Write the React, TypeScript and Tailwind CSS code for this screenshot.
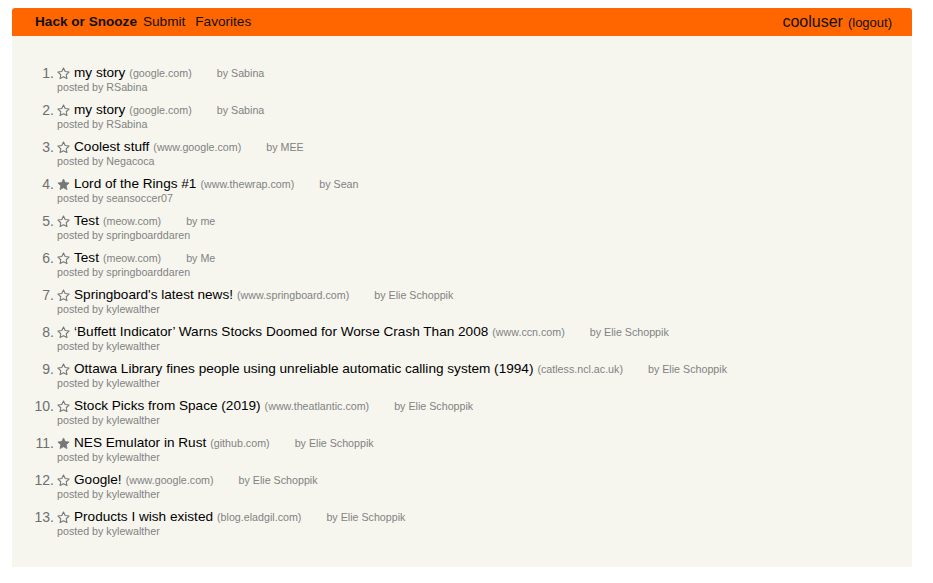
import { useState } from "react";

type Story = {
  id: number;
  title: string;
  hostname: string;
  author: string;
  username: string;
  favorite: boolean;
};

const stories: Story[] = [
  { id: 1, title: "my story", hostname: "google.com", author: "Sabina", username: "RSabina", favorite: false },
  { id: 2, title: "my story", hostname: "google.com", author: "Sabina", username: "RSabina", favorite: false },
  { id: 3, title: "Coolest stuff", hostname: "www.google.com", author: "MEE", username: "Negacoca", favorite: false },
  { id: 4, title: "Lord of the Rings #1", hostname: "www.thewrap.com", author: "Sean", username: "seansoccer07", favorite: true },
  { id: 5, title: "Test", hostname: "meow.com", author: "me", username: "springboarddaren", favorite: false },
  { id: 6, title: "Test", hostname: "meow.com", author: "Me", username: "springboarddaren", favorite: false },
  { id: 7, title: "Springboard's latest news!", hostname: "www.springboard.com", author: "Elie Schoppik", username: "kylewalther", favorite: false },
  { id: 8, title: "‘Buffett Indicator’ Warns Stocks Doomed for Worse Crash Than 2008", hostname: "www.ccn.com", author: "Elie Schoppik", username: "kylewalther", favorite: false },
  { id: 9, title: "Ottawa Library fines people using unreliable automatic calling system (1994)", hostname: "catless.ncl.ac.uk", author: "Elie Schoppik", username: "kylewalther", favorite: false },
  { id: 10, title: "Stock Picks from Space (2019)", hostname: "www.theatlantic.com", author: "Elie Schoppik", username: "kylewalther", favorite: false },
  { id: 11, title: "NES Emulator in Rust", hostname: "github.com", author: "Elie Schoppik", username: "kylewalther", favorite: true },
  { id: 12, title: "Google!", hostname: "www.google.com", author: "Elie Schoppik", username: "kylewalther", favorite: false },
  { id: 13, title: "Products I wish existed", hostname: "blog.eladgil.com", author: "Elie Schoppik", username: "kylewalther", favorite: false },
];

function Star({ filled }: { filled: boolean }) {
  return (
    <svg width="13" height="13" viewBox="0 0 24 24" className="shrink-0">
      <path
        d="M12 1.8l3.1 6.6 7.2.9-5.3 5 1.4 7.1L12 17.9l-6.4 3.5L7 14.3l-5.3-5 7.2-.9z"
        fill={filled ? "#777777" : "none"}
        stroke="#777777"
        strokeWidth={filled ? 1.5 : 2}
        strokeLinejoin="round"
      />
    </svg>
  );
}

export default function App() {
  const [favs, setFavs] = useState<number[]>(
    stories.filter((s) => s.favorite).map((s) => s.id)
  );

  const toggleFav = (id: number) => {
    setFavs(favs.includes(id) ? favs.filter((f) => f !== id) : [...favs, id]);
  };

  return (
    <div className="min-h-[583px] bg-white pt-2 pb-4 font-['Liberation_Sans',Arial,sans-serif]">
      <div className="ml-3 w-[900px]">
        {/* Nav */}
        <nav className="h-7 bg-[#ff6600] rounded-t-[3px] flex items-center pl-[23px] pr-[20px] text-[13.6px] text-[#111]">
          <span className="font-bold mr-[6px]">Hack or Snooze</span>
          <span className="mr-[10px]">Submit</span>
          <span>Favorites</span>
          <div className="ml-auto flex items-baseline">
            <span className="text-[16px]">cooluser</span>
            <span className="ml-[5px] text-[13px]">(logout)</span>
          </div>
        </nav>

        {/* Stories */}
        <section className="bg-[#f6f6ef] pt-[29px] pb-[21px]">
          <ol>
            {stories.map((story, i) => (
              <li key={story.id} className="flex mb-2">
                <span className="w-[42px] text-right text-[14px] leading-4 text-[#6f6f6f]">
                  {i + 1}.
                </span>
                <div className="ml-[3px]">
                  <div className="flex items-center h-4 leading-4">
                    <button onClick={() => toggleFav(story.id)} className="mr-[4px] cursor-pointer">
                      <Star filled={favs.includes(story.id)} />
                    </button>
                    <span className="text-[13.6px] text-black whitespace-nowrap">{story.title}</span>
                    <span className="ml-[4px] text-[10.7px] text-[#828282] whitespace-nowrap">
                      ({story.hostname})
                    </span>
                    <span className="ml-[25px] text-[10.7px] text-[#828282] whitespace-nowrap">
                      by {story.author}
                    </span>
                  </div>
                  <div className="text-[10.7px] leading-[13px] text-[#828282]">
                    posted by {story.username}
                  </div>
                </div>
              </li>
            ))}
          </ol>
        </section>
      </div>
    </div>
  );
}
